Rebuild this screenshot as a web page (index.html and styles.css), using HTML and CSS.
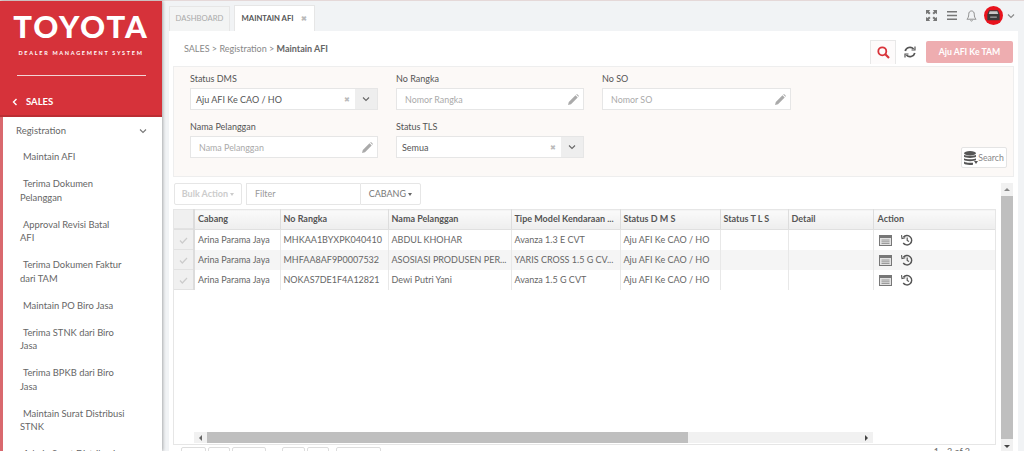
FILE: index.html
```html
<!DOCTYPE html>
<html lang="en">
<head>
<meta charset="utf-8">
<title>Maintain AFI</title>
<link rel="stylesheet" href="styles.css">
</head>
<body>
<div class="app">

<!-- sidebar -->
<div class="side">
	<div class="brand">
		<div class="logo">TOYOTA</div>
		<div class="tagline">DEALER MANAGEMENT SYSTEM</div>
		<div class="rule"></div>
		<div class="module">
			<svg class="back" width="6" height="8" viewBox="0 0 6 8"><path d="M4.500 1 1.500 4l3 3" fill="none" stroke="#fff" stroke-width="1.400"/></svg>
			SALES
		</div>
	</div>
	<div class="menu">
		<div class="menu-head">Registration
			<svg width="8" height="6" viewBox="0 0 8 6"><path d="M1 1.500 4 4.500l3-3" fill="none" stroke="#777" stroke-width="1.100"/></svg>
		</div>
		<div class="menu-item">Maintain AFI</div>
		<div class="menu-item">Terima Dokumen Pelanggan</div>
		<div class="menu-item">Approval Revisi Batal<br>AFI</div>
		<div class="menu-item">Terima Dokumen Faktur dari TAM</div>
		<div class="menu-item">Maintain PO Biro Jasa</div>
		<div class="menu-item">Terima STNK dari Biro Jasa</div>
		<div class="menu-item">Terima BPKB dari Biro Jasa</div>
		<div class="menu-item">Maintain Surat Distribusi STNK</div>
		<div class="menu-item">Admin Surat Distribusi</div>
	</div>
</div>

<!-- main -->
<div class="main">
	<div class="topbar">
		<div class="tabs">
			<div class="tab">DASHBOARD</div>
			<div class="tab active">MAINTAIN AFI <span class="tab-x">&#10006;</span></div>
		</div>
		<div class="top-icons">
			<svg class="expand" width="11" height="11" viewBox="0 0 12 12" fill="#777"><path d="M0 0h4.500L3.200 1.600 5 3.400 3.400 5 1.600 3.200 0 4.500zM12 0v4.500L10.400 3.200 8.600 5 7 3.400l1.800-1.800L7.500 0zM0 12V7.500l1.600 1.300L3.400 7 5 8.600 3.200 10.400 4.500 12zM12 12H7.500l1.300-1.600L7 8.600 8.600 7l1.800 1.800L12 7.500z"/></svg>
			<svg width="10" height="9" viewBox="0 0 11 9" fill="#777" preserveAspectRatio="none"><path d="M0 0h11v1.600H0zM0 3.700h11v1.600H0zM0 7.400h11V9H0z"/></svg>
			<svg width="11" height="12" viewBox="0 0 12 13"><path d="M6 1C3.800 1 3 2.800 3 4.500 3 7.500 2 9 1 10h10C10 9 9 7.500 9 4.500 9 2.800 8.200 1 6 1zM4.800 11.200a1.300 1.300 0 0 0 2.400 0" fill="none" stroke="#888"/></svg>
			<svg class="avatar" width="19" height="19" viewBox="0 0 20 20"><circle cx="10" cy="10" r="10" fill="#e8131d"/><path d="M3.500 9l1.800-4.500h9.400L16.500 9v6h-13z" fill="#3a3a3a"/><path d="M6 5.500h8l1 3H5z" fill="#c8c8c8"/><path d="M6.500 11h7v1.500h-7z" fill="#999"/></svg>
			<svg width="8" height="6" viewBox="0 0 8 6"><path d="M1 1.500 4 4.500l3-3" fill="none" stroke="#888" stroke-width="1.100"/></svg>
		</div>
	</div>

	<div class="page">
		<div class="crumbrow">
			<div class="crumbs">SALES &gt; Registration &gt; <span class="crumb-now">Maintain AFI</span></div>
			<div class="actions">
				<div class="search-toggle">
					<svg width="13" height="13" viewBox="0 0 13 13"><circle cx="5.300" cy="5.300" r="4" fill="none" stroke="#d9333a" stroke-width="1.800"/><path d="M8.300 8.300 12 12" stroke="#d9333a" stroke-width="2.200"/></svg>
				</div>
				<svg class="refresh" width="12" height="12" viewBox="0 0 12 12" fill="none" stroke="#555" stroke-width="1.700"><path d="M1.200 5A4.900 4.900 0 0 1 9.600 3"/><path d="M10.800 7A4.900 4.900 0 0 1 2.400 9"/><path d="M11 0.500V4H7.500M1 11.500V8h3.500" stroke-width="1.200"/></svg>
				<div class="btn-submit">Aju AFI Ke TAM</div>
			</div>
		</div>

		<div class="filters">
			<div class="field">
				<label>Status DMS</label>
				<div class="select">
					<span class="val">Aju AFI Ke CAO / HO</span><span class="clear">&#10006;</span>
					<span class="caret"><svg width="8" height="6" viewBox="0 0 8 6"><path d="M1 1.500 4 4.500l3-3" fill="none" stroke="#666" stroke-width="1.100"/></svg></span>
				</div>
			</div>
			<div class="field">
				<label>No Rangka</label>
				<div class="input"><span class="ph">Nomor Rangka</span><svg width="11" height="11" viewBox="0 0 11 11" fill="#aaa"><path d="M0 11l.8-3L7.500 1.300l2.200 2.200L3 10.200zM8.200.6 9 0l2 2-.6.800z"/></svg></div>
			</div>
			<div class="field">
				<label>No SO</label>
				<div class="input"><span class="ph">Nomor SO</span><svg width="11" height="11" viewBox="0 0 11 11" fill="#aaa"><path d="M0 11l.8-3L7.500 1.300l2.200 2.200L3 10.200zM8.200.6 9 0l2 2-.6.800z"/></svg></div>
			</div>
			<div class="field first-col">
				<label>Nama Pelanggan</label>
				<div class="input"><span class="ph">Nama Pelanggan</span><svg width="11" height="11" viewBox="0 0 11 11" fill="#aaa"><path d="M0 11l.8-3L7.500 1.300l2.200 2.200L3 10.200zM8.200.6 9 0l2 2-.6.800z"/></svg></div>
			</div>
			<div class="field">
				<label>Status TLS</label>
				<div class="select">
					<span class="val">Semua</span><span class="clear">&#10006;</span>
					<span class="caret"><svg width="8" height="6" viewBox="0 0 8 6"><path d="M1 1.500 4 4.500l3-3" fill="none" stroke="#666" stroke-width="1.100"/></svg></span>
				</div>
			</div>
			<div class="search-cell">
				<div class="btn-search">
					<svg width="14" height="14" viewBox="0 0 14 14" fill="#555"><ellipse cx="6" cy="2.200" rx="6" ry="2.200"/><path d="M0 3.800c1 1.400 11 1.400 12 0v2c-1 1.500-11 1.500-12 0zM0 7.200c1 1.400 11 1.400 12 0V9c-1 1.500-11 1.500-12 0zM0 10.500c1 1.400 8 1.500 9 1.200v2C6 14.200 1 14 0 12.500z"/><path d="M10 10h4l-2 3z"/></svg>Search
				</div>
			</div>
		</div>

		<div class="gridwrap">
			<div class="gridcol">
				<div class="toolbar">
					<div class="btn-bulk">Bulk Action <i class="drop"></i></div>
					<div class="filter-box">Filter</div>
					<div class="btn-cabang">CABANG <i class="drop dark"></i></div>
				</div>
				<div class="viewport">
					<table class="grid">
						<colgroup>
							<col class="c-check"><col class="c-cabang"><col class="c-rangka"><col class="c-nama"><col class="c-tipe"><col class="c-dms"><col class="c-tls"><col class="c-detail"><col>
						</colgroup>
						<thead>
							<tr><th class="check"></th><th>Cabang</th><th>No Rangka</th><th>Nama Pelanggan</th><th>Tipe Model Kendaraan ...</th><th>Status D M S</th><th>Status T L S</th><th>Detail</th><th>Action</th></tr>
						</thead>
						<tbody>
							<tr>
								<td class="check"><svg width="9" height="7" viewBox="0 0 9 7"><path d="M1 3.500 3.300 6 8 1" fill="none" stroke="#ccc" stroke-width="1.200"/></svg></td>
								<td>Arina Parama Jaya</td><td>MHKAA1BYXPK040410</td><td>ABDUL KHOHAR</td><td>Avanza 1.3 E CVT</td><td>Aju AFI Ke CAO / HO</td><td></td><td></td>
								<td class="acts"><svg width="13" height="11" viewBox="0 0 13 11"><path d="M0 0h13v11H0z" fill="#777"/><path d="M1 3h11v7H1z" fill="#e2e2e2"/><path d="M2.500 5h8M2.500 6.800h8M2.500 8.500h8" stroke="#888" stroke-width=".8"/></svg><svg width="12" height="12" viewBox="0 0 12 12" fill="none" stroke="#555" stroke-width="1.400"><path d="M2.400 3.200A4.700 4.700 0 1 1 2.200 9"/><path d="M.5 1.200 1 4.500 4.300 3.800" stroke-width="1.100"/><path d="M6.200 3.500V6.400L8 7.500" stroke-width="1.200"/></svg></td>
							</tr>
							<tr class="alt">
								<td class="check"><svg width="9" height="7" viewBox="0 0 9 7"><path d="M1 3.500 3.300 6 8 1" fill="none" stroke="#ccc" stroke-width="1.200"/></svg></td>
								<td>Arina Parama Jaya</td><td>MHFAA8AF9P0007532</td><td>ASOSIASI PRODUSEN PER...</td><td>YARIS CROSS 1.5 G CV...</td><td>Aju AFI Ke CAO / HO</td><td></td><td></td>
								<td class="acts"><svg width="13" height="11" viewBox="0 0 13 11"><path d="M0 0h13v11H0z" fill="#777"/><path d="M1 3h11v7H1z" fill="#e2e2e2"/><path d="M2.500 5h8M2.500 6.800h8M2.500 8.500h8" stroke="#888" stroke-width=".8"/></svg><svg width="12" height="12" viewBox="0 0 12 12" fill="none" stroke="#555" stroke-width="1.400"><path d="M2.400 3.200A4.700 4.700 0 1 1 2.200 9"/><path d="M.5 1.200 1 4.500 4.300 3.800" stroke-width="1.100"/><path d="M6.200 3.500V6.400L8 7.500" stroke-width="1.200"/></svg></td>
							</tr>
							<tr>
								<td class="check"><svg width="9" height="7" viewBox="0 0 9 7"><path d="M1 3.500 3.300 6 8 1" fill="none" stroke="#ccc" stroke-width="1.200"/></svg></td>
								<td>Arina Parama Jaya</td><td>NOKAS7DE1F4A12821</td><td>Dewi Putri Yani</td><td>Avanza 1.5 G CVT</td><td>Aju AFI Ke CAO / HO</td><td></td><td></td>
								<td class="acts"><svg width="13" height="11" viewBox="0 0 13 11"><path d="M0 0h13v11H0z" fill="#777"/><path d="M1 3h11v7H1z" fill="#e2e2e2"/><path d="M2.500 5h8M2.500 6.800h8M2.500 8.500h8" stroke="#888" stroke-width=".8"/></svg><svg width="12" height="12" viewBox="0 0 12 12" fill="none" stroke="#555" stroke-width="1.400"><path d="M2.400 3.200A4.700 4.700 0 1 1 2.200 9"/><path d="M.5 1.200 1 4.500 4.300 3.800" stroke-width="1.100"/><path d="M6.200 3.500V6.400L8 7.500" stroke-width="1.200"/></svg></td>
							</tr>
						</tbody>
					</table>
					<div class="spacer"></div>
					<div class="hscroll">
						<div class="htrack">
							<i class="arrow-l"></i>
							<div class="hthumb"></div>
							<i class="arrow-r"></i>
						</div>
					</div>
				</div>
				<div class="pager">
					<div class="pg pg1"></div><div class="pg pg2"></div><div class="pg pg3"></div>
					<div class="pg pg4"></div><div class="pg pg5"></div><div class="pg pg6"></div>
					<div class="pg-info">1 - 3 of 3</div>
				</div>
			</div>
			<div class="vscroll">
				<i class="arrow-u"></i>
				<div class="vthumb"></div>
				<i class="arrow-d"></i>
			</div>
		</div>
	</div>
</div>

</div>
</body>
</html>
```

FILE: styles.css
```css
html, body
{
	margin:0;
	height:451px;
	overflow:hidden;
	font-family:"Lato", sans-serif;
	font-size:9px;
	color:#666;
	background:#fff;
}
.app
{
	display:flex;
	height:450px;
	border-top:1px solid #e5d8d8;
}

/* sidebar */
.side
{
	width:162px;
	flex:none;
	background:#fff;
	box-shadow:1px 0 3px rgba(0,0,0,.3);
	position:relative;
	overflow:hidden;
}
.brand
{
	height:116px;
	box-sizing:border-box;
	background:#d6323a;
	border-bottom:2px solid #bb2d33;
	color:#fff;
	padding-top:7px;
}
.logo
{
	font-size:31px;
	line-height:36px;
	font-weight:900;
	text-align:center;
	letter-spacing:2px;
}
.tagline
{
	font-size:5.500px;
	line-height:10px;
	font-weight:700;
	text-align:center;
	letter-spacing:1.700px;
	margin-top:4px;
}
.rule
{
	height:1px;
	background:#f3d5d6;
	margin:17px 16px 0 17px;
}
.module
{
	display:flex;
	align-items:center;
	gap:8px;
	padding:20px 0 0 12px;
	font-size:9.500px;
	font-weight:700;
}
.menu
{
	border-left:3px solid #d9686e;
	color:#666;
	font-size:9.400px;
	line-height:13.500px;
	height:340px;
}
.menu-head
{
	display:flex;
	justify-content:space-between;
	align-items:center;
	padding:7px 15px 6px 13px;
	font-size:9.500px;
}
.menu-item
{
	padding:6.750px 36px 6.750px 17px;
	text-indent:3px;
}

/* main */
.main
{
	flex:1;
	min-width:0;
	display:flex;
	flex-direction:column;
	background:#f1f3f5;
}
.topbar
{
	height:30px;
	flex:none;
	display:flex;
	justify-content:space-between;
	padding-left:7px;
}
.tabs
{
	display:flex;
	align-items:flex-end;
	gap:4px;
}
.tab
{
	box-sizing:border-box;
	height:25px;
	width:61px;
	text-align:center;
	line-height:22px;
	font-size:7.700px;
	color:#aaa;
	background:#f3f4f4;
	border:1px solid #e6e6e6;
	border-bottom:none;
}
.tab.active
{
	height:26px;
	width:81px;
	line-height:24px;
	color:#555;
	font-weight:700;
	background:#fff;
}
.tab-x
{
	color:#bbb;
	font-size:7px;
	margin-left:6px;
}
.top-icons
{
	display:flex;
	align-items:center;
	gap:9px;
	padding:0 9px 1px 0;
}
.expand
{
	margin-right:1px;
}
.avatar
{
	margin-left:-2px;
	margin-right:-5px;
}
.page
{
	flex:1;
	background:#fff;
	margin:0 6px 0 7px;
	padding:0 4px;
	min-height:0;
}
.crumbrow
{
	height:35px;
	display:flex;
	justify-content:space-between;
	align-items:flex-end;
	padding-left:11px;
}
.crumbs
{
	font-size:9px;
	color:#888;
	align-self:flex-start;
	padding-top:12px;
}
.crumb-now
{
	color:#666;
	font-weight:700;
}
.actions
{
	display:flex;
	align-items:center;
	height:26px;
	padding-bottom:2px;
	box-sizing:border-box;
}
.search-toggle
{
	box-sizing:border-box;
	width:26px;
	height:24px;
	background:#fdfbfb;
	border:1px solid #e8e8e8;
	border-bottom:none;
	display:flex;
	align-items:center;
	justify-content:center;
}
.refresh
{
	margin:0 10px 0 8px;
}
.btn-submit
{
	width:87px;
	height:22px;
	line-height:21px;
	margin-right:1px;
	text-align:center;
	color:#fff;
	font-weight:700;
	font-size:8.700px;
	background:#eeadb0;
	border-radius:2px;
}

/* filter panel */
.filters
{
	box-sizing:border-box;
	height:111px;
	background:#fcf9f7;
	border:1px solid #eee;
	display:grid;
	grid-template-columns:188px 188px 189px 1fr;
	grid-template-rows:48px 50px;
	column-gap:18px;
	padding:3px 6px 0 16px;
}
.first-col
{
	grid-column:1;
}
.field label
{
	display:block;
	font-size:9px;
	line-height:15px;
	color:#555;
	margin-top:1px;
	margin-bottom:2px;
}
.input, .select
{
	box-sizing:border-box;
	height:22px;
	background:#fff;
	border:1px solid #e6e6e6;
	display:flex;
	align-items:center;
}
.input
{
	justify-content:space-between;
	padding:0 4px 0 8px;
}
.ph
{
	color:#aaa;
	font-size:8.900px;
}
.val
{
	flex:1;
	color:#555;
	padding-left:5px;
	font-size:9px;
}
.clear
{
	color:#bbb;
	font-size:7px;
	margin-right:5px;
}
.caret
{
	width:22px;
	height:20px;
	background:#eeeeee;
	display:flex;
	align-items:center;
	justify-content:center;
}
.search-cell
{
	grid-column:4;
	grid-row:2;
	display:flex;
	justify-content:flex-end;
	align-items:flex-end;
}
.btn-search
{
	box-sizing:border-box;
	width:46px;
	height:21px;
	background:#fff;
	border:1px solid #e4e4e4;
	border-radius:2px;
	display:flex;
	align-items:center;
	justify-content:center;
	color:#888;
	font-size:8.700px;
}

/* grid area */
.gridwrap
{
	display:flex;
	gap:5px;
	padding-top:6px;
}
.gridcol
{
	width:823px;
	flex:none;
}
.toolbar
{
	display:flex;
	height:22px;
	margin:0 0 4px 1px;
}
.btn-bulk, .btn-cabang, .filter-box
{
	box-sizing:border-box;
	height:22px;
	line-height:20px;
	border:1px solid #e6e6e6;
	background:#fff;
	font-size:9px;
}
.btn-bulk
{
	width:68px;
	margin-right:4px;
	text-align:center;
	color:#ccc;
	font-weight:700;
	border-radius:2px;
}
.filter-box
{
	width:114px;
	padding-left:8px;
	color:#999;
	border-right:none;
}
.btn-cabang
{
	width:61px;
	text-align:center;
	color:#777;
	border-radius:0 2px 2px 0;
}
.drop
{
	display:inline-block;
	vertical-align:middle;
	border-left:2.500px solid transparent;
	border-right:2.500px solid transparent;
	border-top:3px solid #ccc;
}
.drop.dark
{
	border-top-color:#666;
}
.viewport
{
	box-sizing:border-box;
	height:236px;
	border:1px solid #e6e6e6;
	border-top:none;
	display:flex;
	flex-direction:column;
}
.grid
{
	width:100%;
	table-layout:fixed;
	border-collapse:collapse;
	font-size:9px;
	line-height:12px;
}
.c-check { width:20px; }
.c-cabang { width:86px; }
.c-rangka { width:108px; }
.c-nama { width:123px; }
.c-tipe { width:109px; }
.c-dms { width:100px; }
.c-tls { width:68px; }
.c-detail { width:85px; }
.grid th
{
	height:17px;
	padding:0 3px 2px;
	text-align:left;
	font-weight:700;
	color:#555;
	background:linear-gradient(#fafafa,#eeeeee);
	border-right:1px solid #ddd;
	border-top:1px solid #e6e6e6;
	border-bottom:1px solid #e0e0e0;
	white-space:nowrap;
	overflow:hidden;
}
.grid td
{
	height:20px;
	padding:0 3px;
	border-right:1px solid #e8e8e8;
	white-space:nowrap;
	overflow:hidden;
}
.grid tr.alt td
{
	background:#f5f5f5;
}
.grid .check, .grid tr.alt td.check
{
	background:#f0f0f0;
	text-align:center;
	border-right:2px solid #dcdcdc;
	box-shadow:inset 0 -1px #e2e2e2;
}
.grid th:last-child, .grid td:last-child
{
	border-right:none;
	border-left:1px solid #bbb;
	padding-left:4px;
}
.grid td.acts
{
	padding:0 0 0 5px;
}
.grid td svg
{
	display:inline-block;
	vertical-align:middle;
}
.acts svg
{
	margin-right:9px;
}
.spacer
{
	flex:1;
}
.hscroll
{
	height:11px;
	margin-bottom:1px;
	padding-left:20px;
}
.htrack
{
	width:679px;
	height:11px;
	background:#f1f1f1;
	display:flex;
	align-items:center;
	justify-content:space-between;
	padding:0 5px;
	box-sizing:border-box;
}
.hthumb
{
	width:481px;
	height:11px;
	background:#bfbfbf;
	margin-left:5px;
	margin-right:auto;
}
.arrow-l
{
	border-top:3px solid transparent;
	border-bottom:3px solid transparent;
	border-right:3px solid #666;
}
.arrow-r
{
	border-top:3px solid transparent;
	border-bottom:3px solid transparent;
	border-left:3px solid #444;
}
.vscroll
{
	width:12px;
	height:268px;
	background:#f1f1f1;
	display:flex;
	flex-direction:column;
	align-items:center;
	box-sizing:border-box;
	padding:5px 0 3px;
}
.arrow-u
{
	border-left:3px solid transparent;
	border-right:3px solid transparent;
	border-bottom:3px solid #888;
}
.arrow-d
{
	border-left:3px solid transparent;
	border-right:3px solid transparent;
	border-top:3px solid #444;
}
.vthumb
{
	flex:1;
	width:12px;
	background:#bfbfbf;
	margin:5px 0 6px;
}

/* pager, mostly below the fold */
.pager
{
	display:flex;
	gap:2px;
	padding:2px 0 0 8px;
	height:20px;
}
.pg
{
	box-sizing:border-box;
	height:18px;
	border:1px solid #ddd;
	border-radius:2px;
}
.pg1 { width:25px; }
.pg2 { width:22px; }
.pg3 { width:34px; margin-right:14px; }
.pg4 { width:23px; }
.pg5 { width:22px; margin-right:5px; }
.pg6 { width:45px; }
.pg-info
{
	margin-left:auto;
	margin-right:26px;
	line-height:10px;
	color:#666;
}
```
